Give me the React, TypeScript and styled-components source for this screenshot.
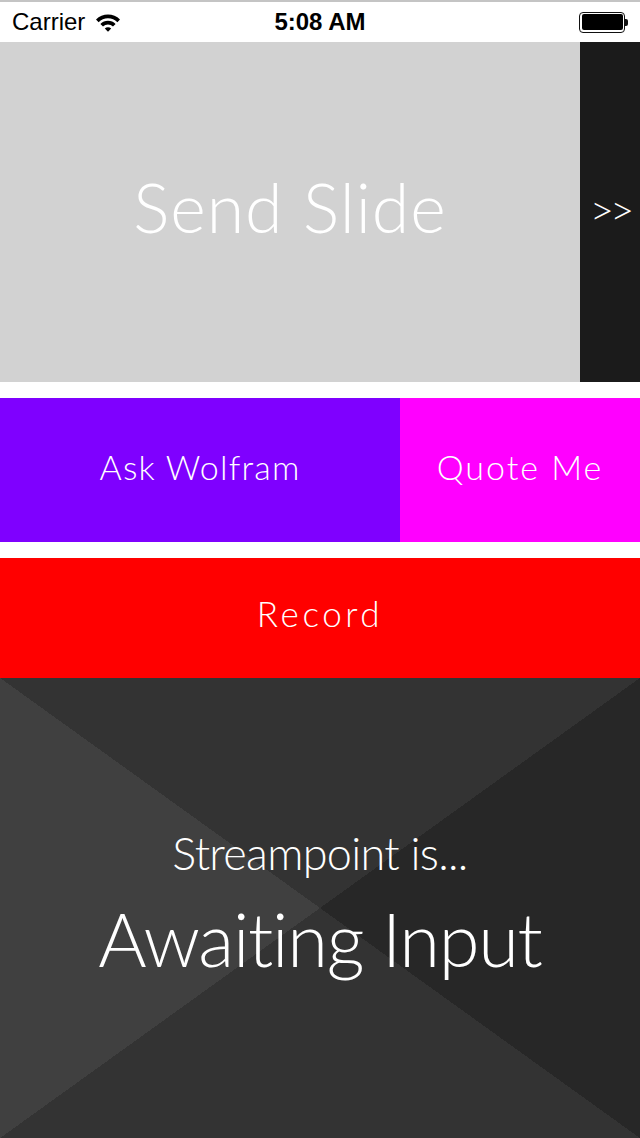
import React from "react";
import styled, { createGlobalStyle } from "styled-components";

const GlobalStyle = createGlobalStyle`
  html, body {
    margin: 0;
    padding: 0;
    background: #ffffff;
  }
  body {
    width: 640px;
    height: 1138px;
    overflow: hidden;
  }
`;

const FACE = `"Lato", "Open Sans", "DejaVu Sans", sans-serif`;

const Screen = styled.div`
  width: 640px;
  height: 1138px;
  display: flex;
  flex-direction: column;
  background: #ffffff;
  overflow: hidden;
`;

const StatusBar = styled.div`
  height: 40px;
  border-top: 2px solid #c4c4c4;
  display: grid;
  grid-template-columns: 1fr auto 1fr;
  align-items: center;
  padding: 0 12px;
  font-family: "Liberation Sans", Arial, sans-serif;
  font-size: 24px;
  color: #000;
`;

const Carrier = styled.div`
  display: flex;
  align-items: center;
  gap: 10px;
`;

const Clock = styled.div`
  font-weight: 700;
`;

const BatteryWrap = styled.div`
  justify-self: end;
  display: flex;
  align-items: center;
`;

const BatteryBody = styled.div`
  width: 41px;
  height: 16px;
  border: 1.5px solid #111;
  border-radius: 4px;
  padding: 1.5px;
  box-sizing: content-box;
  display: flex;
`;

const BatteryFill = styled.div`
  flex: 1;
  background: #000;
  border-radius: 2px;
`;

const BatteryNub = styled.div`
  width: 3px;
  height: 7px;
  background: #111;
  border-radius: 0 2px 2px 0;
`;

const Controls = styled.div`
  display: flex;
  flex-direction: column;
  gap: 16px;
`;

const SlideRow = styled.div`
  display: flex;
  height: 340px;
`;

const Tile = styled.div<{
  $bg: string;
  $w?: number;
  $size: number;
  $spacing?: number;
  $lift?: number;
}>`
  ${(p) => (p.$w ? `width: ${p.$w}px; flex: none;` : "flex: 1;")}
  box-sizing: border-box;
  padding-bottom: ${(p) => p.$lift ?? 0}px;
  background: ${(p) => p.$bg};
  display: flex;
  align-items: center;
  justify-content: center;
  color: #ffffff;
  font-family: ${FACE};
  font-weight: 300;
  font-size: ${(p) => p.$size}px;
  letter-spacing: ${(p) => p.$spacing ?? 0}px;
  white-space: nowrap;
`;

const ActionRow = styled.div`
  display: flex;
  height: 144px;
`;

const RecordRow = styled.div`
  display: flex;
  height: 120px;
`;

const StatusPanel = styled.div`
  flex: 1;
  box-sizing: border-box;
  padding-bottom: 6px;
  display: flex;
  flex-direction: column;
  align-items: center;
  justify-content: center;
  color: #ffffff;
  font-family: ${FACE};
  font-weight: 300;
  background: conic-gradient(
    from 0deg at 50% 50%,
    #333333 0deg 54.29deg,
    #272727 54.29deg 125.71deg,
    #333333 125.71deg 234.29deg,
    #404040 234.29deg 305.71deg,
    #333333 305.71deg 360deg
  );
`;

const Caption = styled.div`
  font-size: 45px;
  line-height: 60px;
  letter-spacing: -0.7px;
`;

const Headline = styled.div`
  font-size: 74px;
  line-height: 96px;
  letter-spacing: -1.3px;
  padding-top: 8px;
`;

const Wifi = () => (
  <svg width="26" height="19" viewBox="0 0 26 19">
    <path d="M1 6.5 A17 17 0 0 1 25 6.5 L22.4 9.2 A13.2 13.2 0 0 0 3.6 9.2 Z" fill="#000" />
    <path d="M5.4 11 A10.8 10.8 0 0 1 20.6 11 L18 13.6 A7 7 0 0 0 8 13.6 Z" fill="#000" />
    <path d="M9.8 15.5 A4.6 4.6 0 0 1 16.2 15.5 L13 18.7 Z" fill="#000" />
  </svg>
);

export default function App() {
  return (
    <>
      <GlobalStyle />
      <Screen>
        <StatusBar>
          <Carrier>
            Carrier
            <Wifi />
          </Carrier>
          <Clock>5:08 AM</Clock>
          <BatteryWrap>
            <BatteryBody>
              <BatteryFill />
            </BatteryBody>
            <BatteryNub />
          </BatteryWrap>
        </StatusBar>
        <Controls>
          <SlideRow>
            <Tile $bg="#d2d2d2" $size={68} $spacing={1} $lift={12}>
              Send Slide
            </Tile>
            <Tile $bg="#1b1b1b" $w={60} $size={42} $spacing={-4} $lift={6}>
              &gt;&gt;
            </Tile>
          </SlideRow>
          <ActionRow>
            <Tile $bg="#7f00ff" $w={400} $size={34} $spacing={1.2} $lift={8}>
              Ask Wolfram
            </Tile>
            <Tile $bg="#ff00ff" $size={34} $spacing={2} $lift={8}>
              Quote Me
            </Tile>
          </ActionRow>
          <RecordRow>
            <Tile $bg="#ff0000" $size={35} $spacing={3.6} $lift={10}>
              Record
            </Tile>
          </RecordRow>
        </Controls>
        <StatusPanel>
          <Caption>Streampoint is...</Caption>
          <Headline>Awaiting Input</Headline>
        </StatusPanel>
      </Screen>
    </>
  );
}
